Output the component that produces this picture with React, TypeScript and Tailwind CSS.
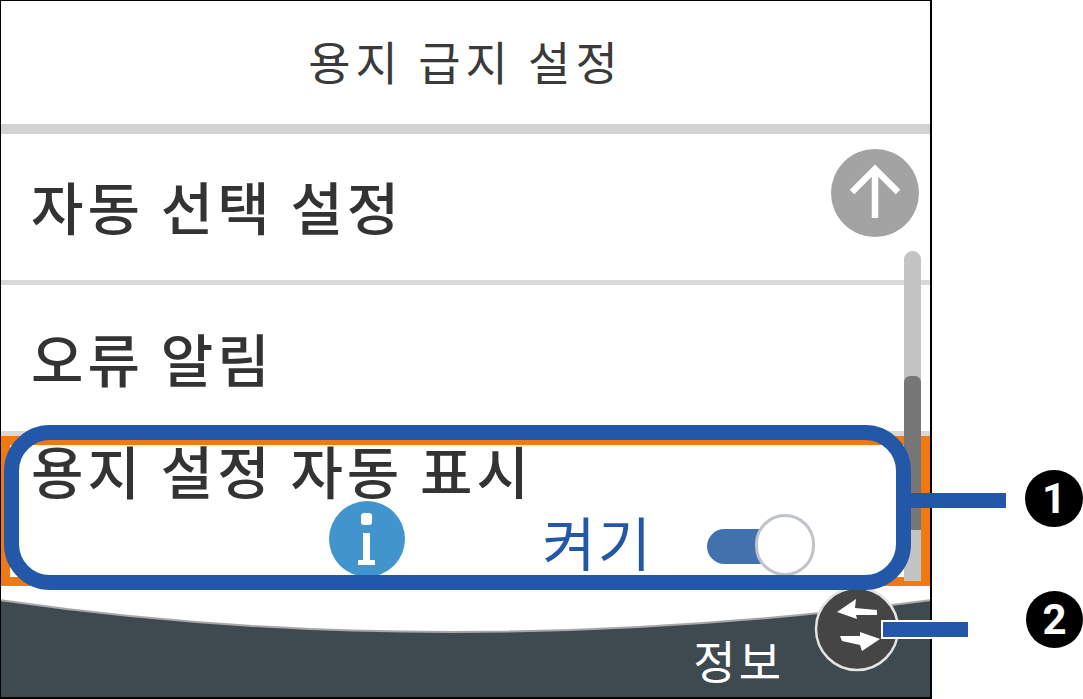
import React from "react";

const ko = { fontFamily: '"Noto Sans CJK KR", sans-serif' };

export default function App() {
  return (
    <div className="relative w-[1083px] h-[699px] bg-white overflow-hidden" style={ko}>
      {/* printer screen */}
      <div className="relative flex flex-col w-[932px] h-[699px] border-t border-r-2 border-b-2 border-l border-black bg-white text-[#333333]">
        <div className="h-[123px] flex items-center justify-center text-[46px] tracking-[5px] pb-[4px] text-[#3a3a3a]">용지 급지 설정</div>
        <div className="h-[10px] bg-[#d2d2d2]" />
        <div className="h-[146px] flex items-center pl-[30px] text-[57px] font-medium tracking-[4px] pb-[2px]">자동 선택 설정</div>
        <div className="h-[5px] bg-[#d8d8d8]" />
        <div className="h-[146px] flex items-center pl-[30px] text-[57px] font-medium tracking-[4px]">오류 알림</div>
        <div className="h-[5px] bg-[#d8d8d8]" />
        <div className="h-[150px] border-[9px] border-[#ef7a14] flex flex-col pl-[21px] pr-[106px]">
          <div className="h-[68px] leading-[56px] text-[57px] font-medium tracking-[4px] -mt-[4px]">용지 설정 자동 표시</div>
          <div className="flex items-center justify-end h-[72px]">
            <svg width="78" height="78" viewBox="0 0 78 78" className="mr-[136px] shrink-0 -mt-[4px]">
              <circle cx="39" cy="39" r="38" fill="#4195cc" />
              <rect x="33" y="13" width="11" height="12" rx="3" fill="#fff" />
              <path d="M35 33h7v27h5v5H30v-5h5z" fill="#fff" />
            </svg>
            <span className="text-[#2358a8] text-[58px] tracking-[2px] mr-[54px] leading-none -mt-[1px]">켜기</span>
            <div className="relative w-[108px] h-[62px] shrink-0 mt-[8px]">
              <div className="absolute left-0 top-[15px] w-[60px] h-[35px] rounded-l-full bg-[#4272ae]" />
              <div className="absolute right-0 top-0 w-[60px] h-[62px] rounded-full bg-white border-[3px] border-[#c0c4c8]" />
            </div>
          </div>
        </div>
        <div className="flex-1 bg-white" />
        {/* bottom bar with curved top edge */}
        <svg width="929" height="102" viewBox="0 0 929 102" className="absolute left-0 bottom-0">
          <path d="M-2 5Q440 69 931 5V104H-2Z" fill="#3f4a50" stroke="#a8a8a8" strokeWidth="2" />
        </svg>
        <span className="absolute right-[146px] bottom-[14px] text-[46px] leading-[48px] tracking-[3px] text-white">정보</span>
        {/* scrollbar */}
        <div className="absolute left-[903px] top-[250px] w-[17px] h-[330px] rounded-t-full bg-[#c4c4c4]">
          <div className="absolute left-0 top-[125px] w-[17px] h-[154px] rounded-t-md bg-[#777777]" />
        </div>
        {/* scroll up */}
        <svg width="88" height="88" viewBox="0 0 88 88" className="absolute left-[830px] top-[148px]">
          <circle cx="44" cy="44" r="44" fill="#a3a3a3" />
          <path d="M44 69V22M21 43L44 20L67 43" fill="none" stroke="#fff" strokeWidth="6.5" />
        </svg>
        {/* swap button */}
        <svg width="86" height="86" viewBox="0 0 86 86" className="absolute left-[813px] top-[585px]">
          <circle cx="43" cy="43" r="41" fill="#454545" stroke="#e4e4e4" strokeWidth="2.5" />
          <path d="M23 26L42 13L41 22L63 24V29L42 29L43 33Z" fill="#fff" />
          <path d="M66 53L46 46L46 50L26 50L28 55L46 59L48 65Z" fill="#fff" />
        </svg>
      </div>

      {/* annotation callouts */}
      <div className="absolute left-[4px] top-[425px] w-[907px] h-[165px] rounded-[46px] border-[15px] border-[#2358a8]" />
      <div className="absolute left-[910px] top-[493px] w-[96px] h-[15px] bg-[#2358a8]" />
      <div className="absolute left-[883px] top-[622px] w-[85px] h-[15px] bg-[#2358a8] shadow-[0_0_0_2px_#ffffff]" />
      <div className="absolute left-[1025px] top-[470px] w-[58px] h-[57px] rounded-full bg-black text-white flex items-center justify-center text-[42px] font-bold leading-none" style={{ fontFamily: '"Roboto", sans-serif' }}>1</div>
      <div className="absolute left-[1026px] top-[591px] w-[57px] h-[57px] rounded-full bg-black text-white flex items-center justify-center text-[42px] font-bold leading-none" style={{ fontFamily: '"Roboto", sans-serif' }}>2</div>
    </div>
  );
}
